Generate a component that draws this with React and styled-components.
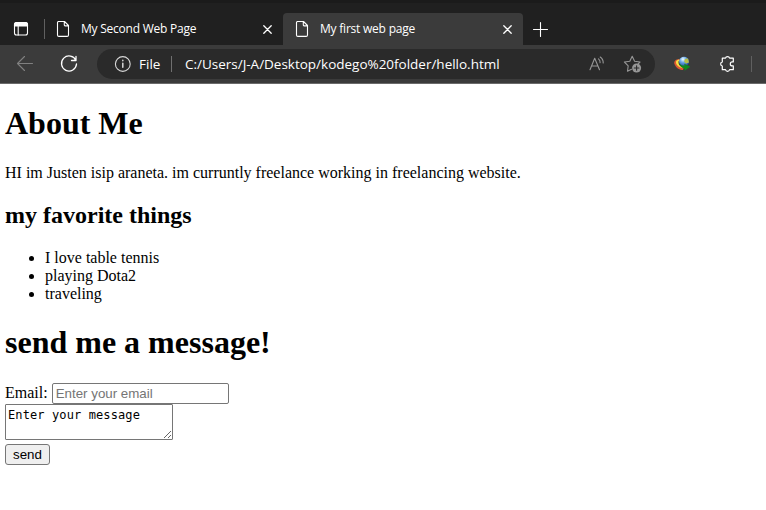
import React from "react";
import styled, { createGlobalStyle } from "styled-components";

const GlobalStyle = createGlobalStyle`
  body { margin: 0; background: #fff; overflow: hidden; }
  * { box-sizing: border-box; }
`;

const Window = styled.div`
  width: 766px;
  height: 510px;
  overflow: hidden;
  background: #fff;
`;

const TabStrip = styled.div`
  display: flex;
  align-items: flex-end;
  height: 45px;
  background: #202020;
  border-top: 3px solid #1b1b1b;
  font-family: "Open Sans", "Noto Sans", sans-serif;
`;

const TabActions = styled.div`
  display: flex;
  align-items: center;
  width: 44px;
  height: 32px;
  padding-left: 13px;
`;

const Divider = styled.span`
  flex: none;
  width: 1px;
  height: ${(p) => p.$height}px;
  margin-left: ${(p) => p.$gap}px;
  background: ${(p) => p.$color};
`;

const Tab = styled.div`
  display: flex;
  align-items: center;
  width: ${(p) => p.$width}px;
  height: 32px;
  padding: 0 11px;
  border-radius: 4px 4px 0 0;
  background: ${(p) => (p.$active ? "#3b3b3b" : "transparent")};
`;

const TabTitle = styled.span`
  flex: 1;
  margin-left: 10px;
  color: #fff;
  font-size: 12px;
  line-height: 18px;
  letter-spacing: ${(p) => p.$tracking}px;
  white-space: nowrap;
`;

const NewTab = styled.div`
  display: flex;
  align-items: center;
  height: 32px;
  padding-left: 9px;
`;

const Toolbar = styled.div`
  display: flex;
  align-items: center;
  height: 39px;
  background: #3b3b3b;
  border-bottom: 1px solid #6a6a6a;
  font-family: "Open Sans", "Noto Sans", sans-serif;
`;

const ToolButton = styled.span`
  display: flex;
  flex: none;
  width: 20px;
  height: 20px;
  margin-left: ${(p) => p.$gap}px;
`;

const AddressBar = styled.div`
  display: flex;
  align-items: center;
  width: 558px;
  height: 30px;
  margin-left: 18px;
  padding-left: 16px;
  border-radius: 15px;
  background: #2a2a2a;
  color: #fff;
`;

const AddressText = styled.span`
  width: ${(p) => p.$width}px;
  margin-left: ${(p) => p.$gap}px;
  font-size: 13.5px;
  line-height: 20px;
  letter-spacing: ${(p) => p.$tracking}px;
  white-space: nowrap;
`;

const Page = styled.main`
  display: flow-root;
  padding: 0 5px;
  color: #000;
  font: 16px/18px "Liberation Serif", "Times New Roman", serif;
`;

const Title = styled.h1`
  margin: 21.44px 0;
  font-size: 32px;
  line-height: 37px;
`;

const Subtitle = styled.h2`
  margin: 19.92px 0;
  font-size: 24px;
  line-height: 27px;
`;

const Paragraph = styled.p`
  margin: 0;
`;

const List = styled.ul`
  margin: 0;
  padding-left: 40px;
`;

const Form = styled.form`
  display: flex;
  flex-direction: column;
  align-items: flex-start;
`;

const Field = styled.label`
  display: flex;
  align-items: center;
  gap: 4px;
  height: 21px;
`;

const EmailInput = styled.input`
  width: 177px;
  height: 21px;
  margin: 0;
  padding: 1px 2px 1px 3px;
  border: 1px solid #767676;
  border-radius: 2px;
  font: 13.333px "Liberation Sans", Arial, sans-serif;
  &::placeholder { color: #757575; }
`;

const Message = styled.textarea`
  width: 168px;
  height: 36px;
  margin: 0;
  padding: 3px 2px 2px;
  border: 1px solid #767676;
  border-radius: 1px;
  overflow: hidden;
  color: #000;
  font: 12px/15px "DejaVu Sans Mono", monospace;
  letter-spacing: 0.11px;
`;

const SendButton = styled.button`
  width: 45px;
  height: 21px;
  margin-top: 4px;
  padding: 0;
  border: 1px solid #767676;
  border-radius: 3px;
  background: #efefef;
  color: #000;
  font: 13.333px "Liberation Sans", Arial, sans-serif;
`;

const Svg = styled.svg`
  display: block;
  flex: none;
  fill: none;
  stroke: ${(p) => p.$color || "#fff"};
  stroke-width: ${(p) => p.$weight || 1.1};
  stroke-linecap: round;
  stroke-linejoin: round;
`;

const WindowIcon = () => (
  <Svg width="16" height="16" viewBox="0 0 16 16">
    <rect x="1.5" y="1.5" width="13" height="12.5" rx="2" />
    <path d="M1.5 4V3.5a2 2 0 0 1 2-2h9a2 2 0 0 1 2 2V5h-13z" fill="#fff" />
    <path d="M5.2 5v9" />
  </Svg>
);

const FileIcon = () => (
  <Svg width="16" height="16" viewBox="0 0 16 16">
    <path d="M3.5.5h6l4 4V14a1.4 1.4 0 0 1-1.4 1.4H3.9A1.4 1.4 0 0 1 2.5 14V1.5a1 1 0 0 1 1-1zM9.3.7v3a1.2 1.2 0 0 0 1.2 1.2h2.8" />
  </Svg>
);

const CloseIcon = () => (
  <Svg width="9" height="9" viewBox="0 0 9 9" $weight={1.3}>
    <path d="M.8.8l7.4 7.4M8.2.8L.8 8.2" />
  </Svg>
);

const PlusIcon = () => (
  <Svg width="16" height="16" viewBox="0 0 16 16">
    <path d="M8.5 1.5v14M1.5 8.5h14" />
  </Svg>
);

const BackIcon = () => (
  <Svg width="20" height="20" viewBox="0 0 20 20" $color="#808080">
    <path d="M17.5 9.5H2.5M9.5 2.5l-7 7 7 7" />
  </Svg>
);

const ReloadIcon = () => (
  <Svg width="20" height="20" viewBox="0 0 20 20" $weight={1.3}>
    <path d="M16.9 6.5A7.5 7.5 0 1 0 17.5 10M17 2.5v4h-4.5" />
  </Svg>
);

const InfoIcon = () => (
  <Svg width="18" height="18" viewBox="0 0 18 18" $color="#d8d8d8">
    <circle cx="9.8" cy="9" r="7.4" />
    <path d="M9.8 8.3v4M9.8 5.3v.5" strokeWidth="1.5" />
  </Svg>
);

const ReadAloudIcon = () => (
  <Svg width="20" height="20" viewBox="0 0 20 20" $color="#969696">
    <path d="M4 15.8L8.7 4.2 13.5 15.8M5.6 12h6.2M12.5 4.8a4.5 4.5 0 0 1 1.6 4M14.2 3a7 7 0 0 1 3 6" />
  </Svg>
);

const FavoriteIcon = () => (
  <Svg width="20" height="20" viewBox="0 0 20 20" $color="#969696">
    <path d="M8.5 15.2l-4 2 .7-5.4-3.8-3.8 5.4-.8L9.2 2.3l2.4 4.9 5.4.8-2.1 2.1" />
    <circle cx="13.6" cy="14" r="4.5" fill="#969696" stroke="none" />
    <path d="M13.6 11.7v4.6M11.3 14h4.6" stroke="#2a2a2a" />
  </Svg>
);

const DownloadManagerIcon = () => (
  <Svg width="20" height="20" viewBox="0 0 20 20">
    <defs>
      <radialGradient id="globe" cx="40%" cy="25%" r="75%">
        <stop offset="0" stopColor="#f4ffff" />
        <stop offset=".4" stopColor="#6eabe8" />
        <stop offset="1" stopColor="#194794" />
      </radialGradient>
    </defs>
    <g stroke="none">
      <path d="M8 5C3 5 1 8 3 11c1 3 5 5 8 5l1-3C8 12 6 9 8 5z" fill="#dd5832" />
      <path d="M7 5.5C4 6 3 8 5 11c1.5 2 4 3 6 3V11z" fill="#f5df45" />
      <path d="M6.7 7c-.8 3 1.4 6.2 5 6.2V10z" fill="#202a20" />
      <circle cx="12" cy="7.8" r="5" fill="url(#globe)" />
      <path d="M13 5l3-.5 1 4-3 1-2-2z" fill="#b8be45" />
      <path d="M7.5 9.3c1.4 1.8 3 2.5 5 2.5l-.2-2 6 3-5.8 4 .1-2.1C10 14.5 8 12 7.5 9.3z" fill="#118a1d" />
    </g>
  </Svg>
);

const ExtensionsIcon = () => (
  <Svg width="20" height="20" viewBox="0 0 20 20" $weight={1.2}>
    <path d="M5.3 4.2h3.2a2.1 2.1 0 0 1 4.1 0h3.7v3.7h-1a2 2 0 0 0 0 4h1v3.8h-3.7a2.1 2.1 0 0 1-4.1 0H5.3V12a2.1 2.1 0 0 1 0-4.1z" />
  </Svg>
);

export default function App() {
  return (
    <Window>
      <GlobalStyle />
      <TabStrip>
        <TabActions>
          <WindowIcon />
          <Divider $height={20} $gap={15} $color="#606060" />
        </TabActions>
        <Tab $width={239}>
          <FileIcon />
          <TabTitle $tracking={-0.23}>My Second Web Page</TabTitle>
          <CloseIcon />
        </Tab>
        <Tab $width={240} $active>
          <FileIcon />
          <TabTitle $tracking={-0.22}>My first web page</TabTitle>
          <CloseIcon />
        </Tab>
        <NewTab><PlusIcon /></NewTab>
      </TabStrip>
      <Toolbar>
        <ToolButton $gap={15}><BackIcon /></ToolButton>
        <ToolButton $gap={24}><ReloadIcon /></ToolButton>
        <AddressBar>
          <InfoIcon />
          <AddressText $gap={8} $width={24} $tracking={0}>File</AddressText>
          <Divider $height={16} $gap={8} $color="#707070" />
          <AddressText $gap={13} $width={316} $tracking={-0.01}>
            C:/Users/J-A/Desktop/kodego%20folder/hello.html
          </AddressText>
          <ToolButton $gap={85}><ReadAloudIcon /></ToolButton>
          <ToolButton $gap={17}><FavoriteIcon /></ToolButton>
        </AddressBar>
        <ToolButton $gap={17}><DownloadManagerIcon /></ToolButton>
        <ToolButton $gap={25}><ExtensionsIcon /></ToolButton>
        <Divider $height={16} $gap={14} $color="#606060" />
      </Toolbar>
      <Page>
        <Title>About Me</Title>
        <Paragraph>HI im Justen isip araneta. im curruntly freelance working in freelancing website.</Paragraph>
        <Subtitle>my favorite things</Subtitle>
        <List>
          <li>I love table tennis</li>
          <li>playing Dota2</li>
          <li>traveling</li>
        </List>
        <Title>send me a message!</Title>
        <Form>
          <Field>Email: <EmailInput type="email" placeholder="Enter your email" /></Field>
          <Message defaultValue="Enter your message" />
          <SendButton type="button">send</SendButton>
        </Form>
      </Page>
    </Window>
  );
}
